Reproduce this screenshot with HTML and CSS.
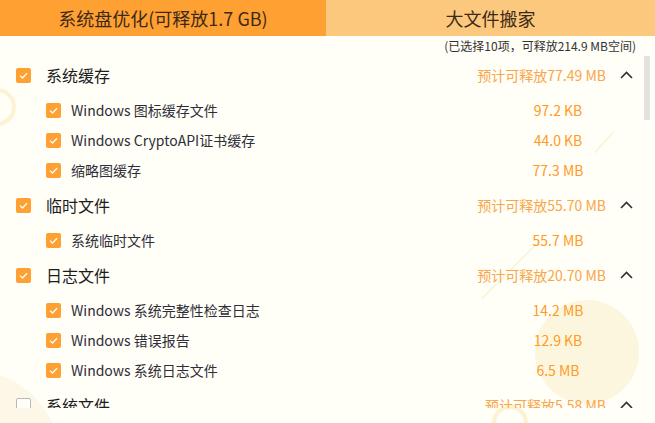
FILE: index.html
```html
<!DOCTYPE html>
<html lang="zh-CN">
<head>
<meta charset="utf-8">
<link rel="stylesheet" href="styles.css">
</head>
<body>
<div class="app">
  <div class="deco deco-ring-left"></div>
  <div class="deco deco-blob-br"></div>
  <div class="deco deco-blob-bl"></div>
  <div class="deco deco-ring-bottom"></div>
  <div class="deco deco-line-a"></div>
  <div class="deco deco-line-b"></div>

  <div class="tabs">
    <div class="tab tab-active">系统盘优化(可释放1.7 GB)</div>
    <div class="tab tab-idle">大文件搬家</div>
  </div>
  <div class="summary">(已选择10项，可释放214.9 MB空间)</div>

  <div class="list-wrap">
    <div class="list">
      <div class="group-head">
        <span class="cb cb-on"><svg viewBox="0 0 15 15"><polyline points="4,7.6 6.5,10 11,5.2"/></svg></span>
        <span class="head-label">系统缓存</span>
        <span class="head-size">预计可释放77.49 MB</span>
        <svg class="chev" viewBox="0 0 13 8"><polyline points="1,7 6.5,1.5 12,7"/></svg>
      </div>
      <div class="item">
        <span class="cb cb-on"><svg viewBox="0 0 15 15"><polyline points="4,7.6 6.5,10 11,5.2"/></svg></span>
        <span class="item-label">Windows 图标缓存文件</span>
        <span class="item-size">97.2 KB</span>
      </div>
      <div class="item">
        <span class="cb cb-on"><svg viewBox="0 0 15 15"><polyline points="4,7.6 6.5,10 11,5.2"/></svg></span>
        <span class="item-label">Windows CryptoAPI证书缓存</span>
        <span class="item-size">44.0 KB</span>
      </div>
      <div class="item">
        <span class="cb cb-on"><svg viewBox="0 0 15 15"><polyline points="4,7.6 6.5,10 11,5.2"/></svg></span>
        <span class="item-label">缩略图缓存</span>
        <span class="item-size">77.3 MB</span>
      </div>

      <div class="group-head">
        <span class="cb cb-on"><svg viewBox="0 0 15 15"><polyline points="4,7.6 6.5,10 11,5.2"/></svg></span>
        <span class="head-label">临时文件</span>
        <span class="head-size">预计可释放55.70 MB</span>
        <svg class="chev" viewBox="0 0 13 8"><polyline points="1,7 6.5,1.5 12,7"/></svg>
      </div>
      <div class="item">
        <span class="cb cb-on"><svg viewBox="0 0 15 15"><polyline points="4,7.6 6.5,10 11,5.2"/></svg></span>
        <span class="item-label">系统临时文件</span>
        <span class="item-size">55.7 MB</span>
      </div>

      <div class="group-head">
        <span class="cb cb-on"><svg viewBox="0 0 15 15"><polyline points="4,7.6 6.5,10 11,5.2"/></svg></span>
        <span class="head-label">日志文件</span>
        <span class="head-size">预计可释放20.70 MB</span>
        <svg class="chev" viewBox="0 0 13 8"><polyline points="1,7 6.5,1.5 12,7"/></svg>
      </div>
      <div class="item">
        <span class="cb cb-on"><svg viewBox="0 0 15 15"><polyline points="4,7.6 6.5,10 11,5.2"/></svg></span>
        <span class="item-label">Windows 系统完整性检查日志</span>
        <span class="item-size">14.2 MB</span>
      </div>
      <div class="item">
        <span class="cb cb-on"><svg viewBox="0 0 15 15"><polyline points="4,7.6 6.5,10 11,5.2"/></svg></span>
        <span class="item-label">Windows 错误报告</span>
        <span class="item-size">12.9 KB</span>
      </div>
      <div class="item">
        <span class="cb cb-on"><svg viewBox="0 0 15 15"><polyline points="4,7.6 6.5,10 11,5.2"/></svg></span>
        <span class="item-label">Windows 系统日志文件</span>
        <span class="item-size">6.5 MB</span>
      </div>

      <div class="group-head">
        <span class="cb cb-off"></span>
        <span class="head-label">系统文件</span>
        <span class="head-size">预计可释放5.58 MB</span>
        <svg class="chev" viewBox="0 0 13 8"><polyline points="1,7 6.5,1.5 12,7"/></svg>
      </div>
    </div>
    <div class="scroll-thumb"></div>
  </div>
</div>
</body>
</html>
```
FILE: styles.css
```css
* { box-sizing: border-box; }
html, body { margin: 0; padding: 0; }
body {
  background: #fffef7;
  font-family: "Noto Sans CJK SC", "Noto Sans", sans-serif;
  color: #222;
}
.app {
  position: relative;
  width: 655px;
  height: 423px;
  overflow: hidden;
  background: #fffef7;
}
.deco { position: absolute; pointer-events: none; z-index: 0; }
.deco-ring-left {
  left: -22px; top: 88px; width: 38px; height: 38px;
  border: 4px solid #fdf3d4; border-radius: 50%;
}
.deco-blob-br {
  left: 535px; top: 300px; width: 104px; height: 104px;
  background: #fdf6df; border-radius: 50%;
}
.deco-blob-bl {
  left: -120px; top: 370px; width: 180px; height: 180px;
  background: #fcf7e6; border-radius: 50%;
}
.deco-ring-bottom {
  left: 492px; top: 405px; width: 36px; height: 36px;
  border: 4px solid #fdf2cf; border-radius: 50%;
}
.deco-line-a {
  left: 590px; top: 142px; width: 28px; height: 1px;
  background: #fcefc8; transform: rotate(-48deg);
}
.deco-line-b {
  left: 470px; top: 270px; width: 80px; height: 1px;
  background: #fcefc8; transform: rotate(-45deg);
}

.tabs {
  position: relative; z-index: 1;
  display: flex; height: 36px;
}
.tab {
  display: flex; align-items: center; justify-content: center;
  font-size: 18px; color: #3d2a16;
}
.tab-active { width: 326px; background: #ffa033; }
.tab-idle { flex: 1; background: #fbc87e; }

.summary {
  position: relative; z-index: 1;
  height: 19px; line-height: 19px;
  text-align: right; padding-right: 19px;
  font-size: 12px; color: #333;
}

.list-wrap {
  position: relative; z-index: 1;
  height: 353px; overflow: hidden;
}
.list { display: flex; flex-direction: column; }

.group-head {
  display: flex; align-items: center;
  height: 40px; padding: 0 22px 0 16px;
}
.head-label { margin-left: 15px; font-size: 16px; color: #1c1c1c; flex: 1; }
.head-size { font-size: 14px; color: #f9a64a; }
.chev {
  width: 13px; height: 8px; margin-left: 14px;
  fill: none; stroke: #2f3036; stroke-width: 1.6;
}

.item {
  display: flex; align-items: center;
  height: 30px; padding-left: 46px;
}
.item-label { margin-left: 10px; font-size: 14px; color: #2e2e38; flex: 1; }
.item-size {
  width: 80px; margin-right: 57px;
  text-align: center; font-size: 14px; color: #ff9b26;
}

.cb {
  width: 15px; height: 15px; flex: none;
  border-radius: 2px; display: block;
}
.cb svg { display: block; width: 15px; height: 15px; fill: none; stroke: #fff; stroke-width: 1.3; }
.cb-on { background: #ffa033; }
.cb-off { border: 1px solid #b9b9b9; background: #fffef9; }

.scroll-thumb {
  position: absolute; right: 5px; top: 1px;
  width: 6px; height: 64px; background: #e3e2dd;
}
```
